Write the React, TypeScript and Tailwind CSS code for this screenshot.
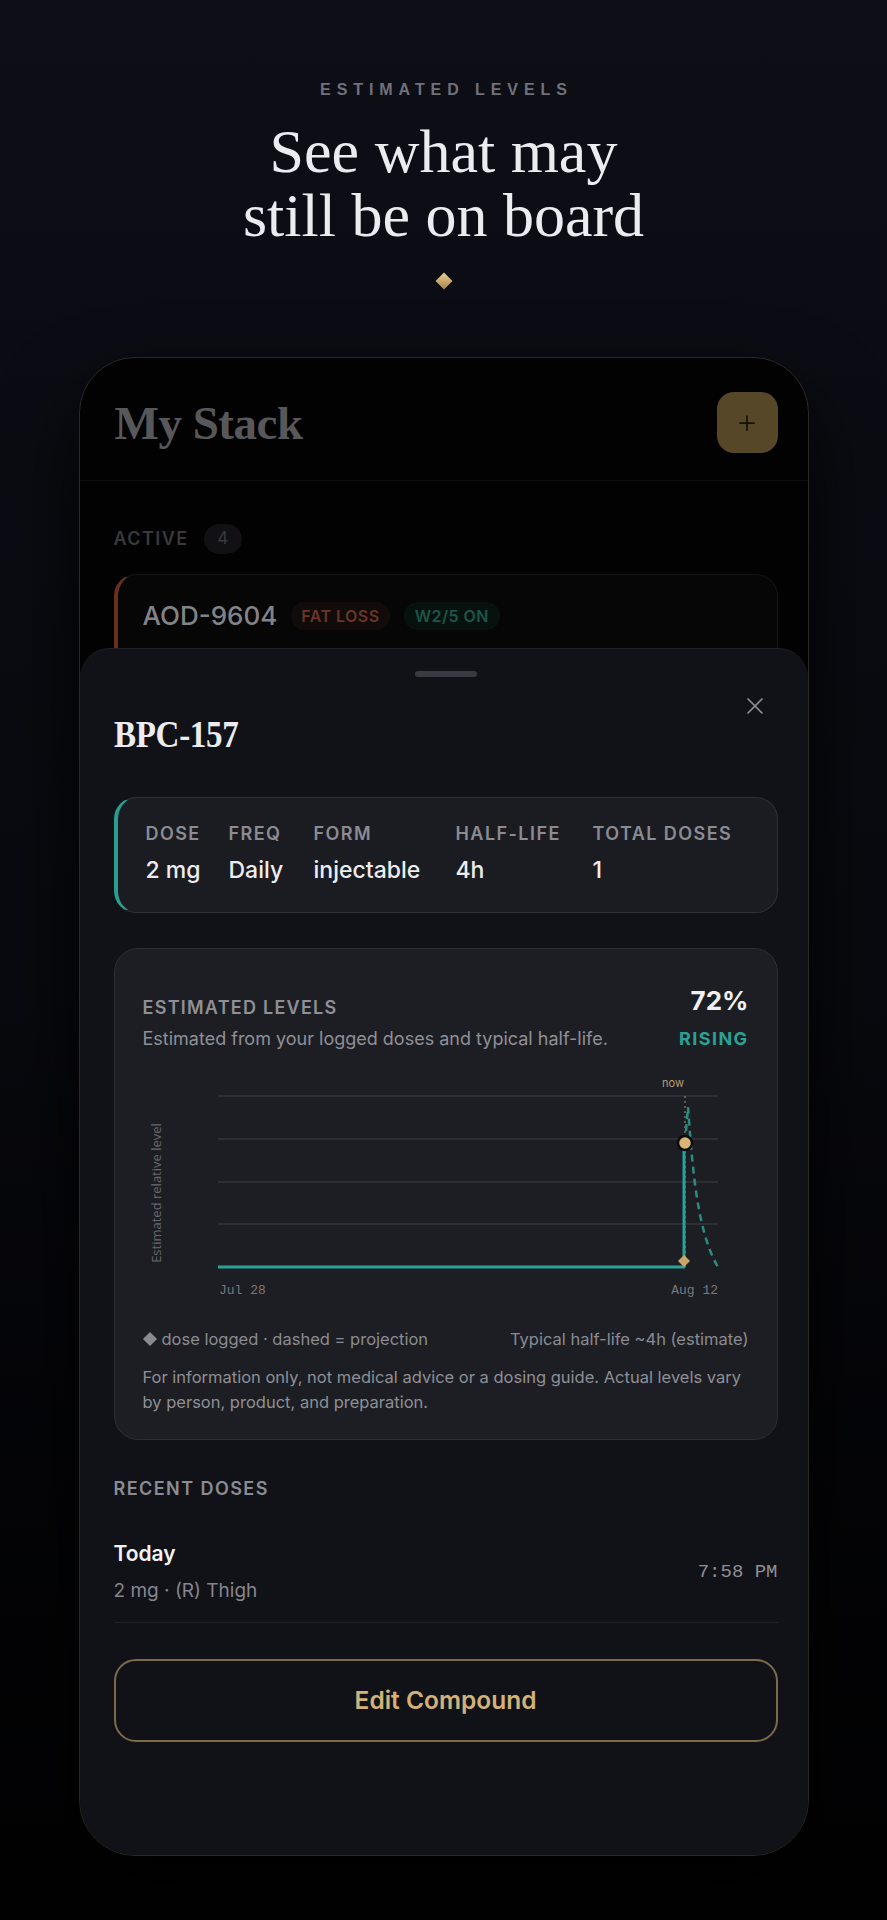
import { Plus, X } from 'lucide-react';

const sans = "font-['Inter',sans-serif]";

function StackPage() {
  return (
    <div className="flex flex-col">
      <div className="flex items-center justify-between pl-[35px] pr-[30px] pt-[34px] pb-[27px] border-b border-[#0f0f11]">
        <h1 className="font-['Liberation_Serif',serif] font-bold text-[47px] leading-[48px] text-[#58585b] tracking-[-0.01em]">
          My Stack
        </h1>
        <button className="w-[61px] h-[61px] rounded-[17px] bg-[#574729] flex items-center justify-center">
          <Plus size={24} strokeWidth={1.75} className="text-[#15110a]" />
        </button>
      </div>

      <div className="flex items-center gap-[15px] pl-[34px] mt-[43px]">
        <span className={`${sans} text-[18px] leading-6 font-semibold tracking-[0.08em] text-[#39393c]`}>ACTIVE</span>
        <span className={`${sans} w-[38px] h-[30px] rounded-full bg-[#111113] text-[#3a3a3c] text-[17px] flex items-center justify-center`}>
          4
        </span>
      </div>

      <div className="ml-[34px] mr-[30px] mt-[20px] h-[110px] rounded-t-[22px] border border-[#141416] border-l-4 border-l-[#6a2f1c] bg-[#060607] pl-[25px] pt-[25px]">
        <div className="flex items-center gap-[14px]">
          <span className={`${sans} text-[26px] leading-8 font-medium text-[#838387]`}>AOD-9604</span>
          <span className={`${sans} h-[28px] px-[10px] rounded-full bg-[#110b0a] text-[#6a3525] text-[16px] font-semibold tracking-[0.03em] flex items-center`}>
            FAT LOSS
          </span>
          <span className={`${sans} h-[28px] px-[11px] rounded-full bg-[#07120f] text-[#1d5546] text-[16px] font-semibold tracking-[0.03em] flex items-center`}>
            W2/5 ON
          </span>
        </div>
      </div>
    </div>
  );
}

function LevelsChart() {
  const grid = [26, 69, 112, 154];
  return (
    <svg viewBox="0 0 605 232" width="605" height="232" className="block mt-[18px]">
      {grid.map((y) => (
        <line key={y} x1="75" x2="575" y1={y} y2={y} stroke="#35363b" strokeWidth="1.5" />
      ))}
      <text
        x="15"
        y="123"
        transform="rotate(-90 15 123)"
        textAnchor="middle"
        dominantBaseline="middle"
        fontFamily="'Open Sans', sans-serif"
        fontSize="13"
        fill="#67686e"
      >
        Estimated relative level
      </text>
      <text x="530" y="17" textAnchor="middle" fontFamily="Inter, sans-serif" fontSize="11" fill="#b39f74">
        now
      </text>
      <line x1="542" x2="542" y1="26" y2="197" stroke="#7a735f" strokeWidth="1.5" strokeDasharray="2 3" />
      <path d="M75 197 H541 V73" fill="none" stroke="#2ba194" strokeWidth="3" strokeLinejoin="round" />
      <path
        d="M542 73 L545 37 C549 90, 553 160, 575 197"
        fill="none"
        stroke="#2a8b80"
        strokeWidth="2.5"
        strokeDasharray="7 5"
      />
      <polygon points="541,185 547,191 541,197 535,191" fill="#c8a66a" />
      <circle cx="542" cy="73" r="7" fill="#d9b574" stroke="#0b0b0d" strokeWidth="2.5" />
      <text x="76" y="224" fontFamily="'Liberation Mono', monospace" fontSize="13" fill="#77787e">
        Jul 28
      </text>
      <text x="575" y="224" textAnchor="end" fontFamily="'Liberation Mono', monospace" fontSize="13" fill="#77787e">
        Aug 12
      </text>
    </svg>
  );
}

function DetailSheet() {
  const stats = [
    { label: 'DOSE', value: '2 mg', w: 'w-[83px]' },
    { label: 'FREQ', value: 'Daily', w: 'w-[85px]' },
    { label: 'FORM', value: 'injectable', w: 'w-[142px]' },
    { label: 'HALF-LIFE', value: '4h', w: 'w-[137px]' },
    { label: 'TOTAL DOSES', value: '1', w: '' },
  ];

  return (
    <div className={`${sans} absolute left-0 right-0 top-[290px] bottom-0 bg-[#111218] border-t border-[#202128] rounded-t-[30px] flex flex-col pl-[34px] pr-[30px]`}>
      <div className="mt-[22px] ml-[301px] w-[62px] h-[6px] rounded-full bg-[#393a41]" />

      <div className="flex items-start justify-between mt-[38px]">
        <h2 className="font-['Liberation_Serif',serif] font-bold text-[38px] leading-[38px] text-[#ececf0] scale-x-[0.87] origin-left tracking-[-0.01em]">
          BPC-157
        </h2>
        <button className="-mt-[23px] mr-[9px] text-[#8e8f95]">
          <X size={28} strokeWidth={1.5} />
        </button>
      </div>

      <div className="mt-[44px] rounded-[22px] border border-[#2f3036] border-l-4 border-l-[#2a9d8f] bg-[#1b1c21] pl-[28px] pt-[24px] pb-[27px]">
        <div className="flex">
          {stats.map((s) => (
            <div key={s.label} className={`flex flex-col shrink-0 ${s.w}`}>
              <span className="text-[18px] leading-6 font-semibold tracking-[0.08em] text-[#8b8c93]">{s.label}</span>
              <span className="mt-[9px] text-[23px] leading-[30px] font-medium text-[#ededf0]">{s.value}</span>
            </div>
          ))}
        </div>
      </div>

      <div className="mt-[35px] rounded-[24px] border border-[#2d2e34] bg-[#1d1e23] px-[28px] pb-[24px]">
        <div className="flex items-start justify-between pt-[35px]">
          <div className="flex flex-col mt-[12px]">
            <span className="text-[18px] leading-6 font-semibold tracking-[0.07em] text-[#8f9097]">ESTIMATED LEVELS</span>
            <span className="mt-[6px] text-[18px] leading-[26px] text-[#8f9097]">
              Estimated from your logged doses and typical half-life.
            </span>
          </div>
          <div className="flex flex-col items-end">
            <span className="text-[26px] leading-[34px] font-bold text-[#f0f0f2]">72%</span>
            <span className="mt-[9px] text-[18px] leading-6 font-bold tracking-[0.08em] text-[#2ba194]">RISING</span>
          </div>
        </div>

        <LevelsChart />

        <div className="mt-[25px] flex items-center justify-between text-[16.5px] leading-6 text-[#8a8b92]">
          <div className="flex items-center gap-[7px]">
            <span className="w-[10px] h-[10px] rotate-45 bg-[#8a8b92] ml-[2px]" />
            <span>dose logged · dashed = projection</span>
          </div>
          <span>Typical half-life ~4h (estimate)</span>
        </div>

        <p className="mt-[14px] text-[16.5px] leading-[25px] text-[#8e8f96]">
          For information only, not medical advice or a dosing guide. Actual levels vary by person, product, and
          preparation.
        </p>
      </div>

      <div className="mt-[37px] text-[18px] leading-6 font-semibold tracking-[0.08em] text-[#8b8c93]">RECENT DOSES</div>

      <div className="mt-[39px] pb-[18px] border-b border-[#1f2027] flex items-center justify-between">
        <div className="flex flex-col">
          <span className="text-[21px] leading-7 font-semibold text-[#f2f2f4]">Today</span>
          <span className="mt-[10px] text-[19px] leading-[26px] text-[#85868c]">2 mg · (R) Thigh</span>
        </div>
        <span className="font-['Liberation_Mono',monospace] text-[19px] text-[#8e8f94]">7:58 PM</span>
      </div>

      <button className="mt-[36px] h-[83px] rounded-[22px] border-2 border-[#7d6a48] text-[24.5px] font-semibold text-[#d3b277]">
        Edit Compound
      </button>
    </div>
  );
}

export default function App() {
  return (
    <div className="w-full min-h-[1920px] bg-gradient-to-b from-[#0d0e16] via-[#090a0f] to-[#020203] flex flex-col items-center pt-[78px]">
      <div className="font-['Liberation_Sans',sans-serif] font-bold text-[16px] leading-6 tracking-[0.37em] text-[#6f717b] pl-[0.37em]">
        ESTIMATED LEVELS
      </div>
      <h1 className="mt-[17px] font-['Liberation_Serif',serif] text-[62px] leading-[64px] text-[#ececf0] text-center">
        See what may
        <br />
        still be on board
      </h1>
      <div className="mt-[28px] w-[12px] h-[12px] rotate-45 bg-gradient-to-br from-[#e9cf94] to-[#a8844a]" />

      <div className="mt-[70px] relative w-[730px] h-[1499px] rounded-[56px] border border-[#2a2926] bg-[#020203] overflow-hidden shadow-[0_40px_80px_rgba(0,0,0,0.85)]">
        <StackPage />
        <DetailSheet />
      </div>
    </div>
  );
}
